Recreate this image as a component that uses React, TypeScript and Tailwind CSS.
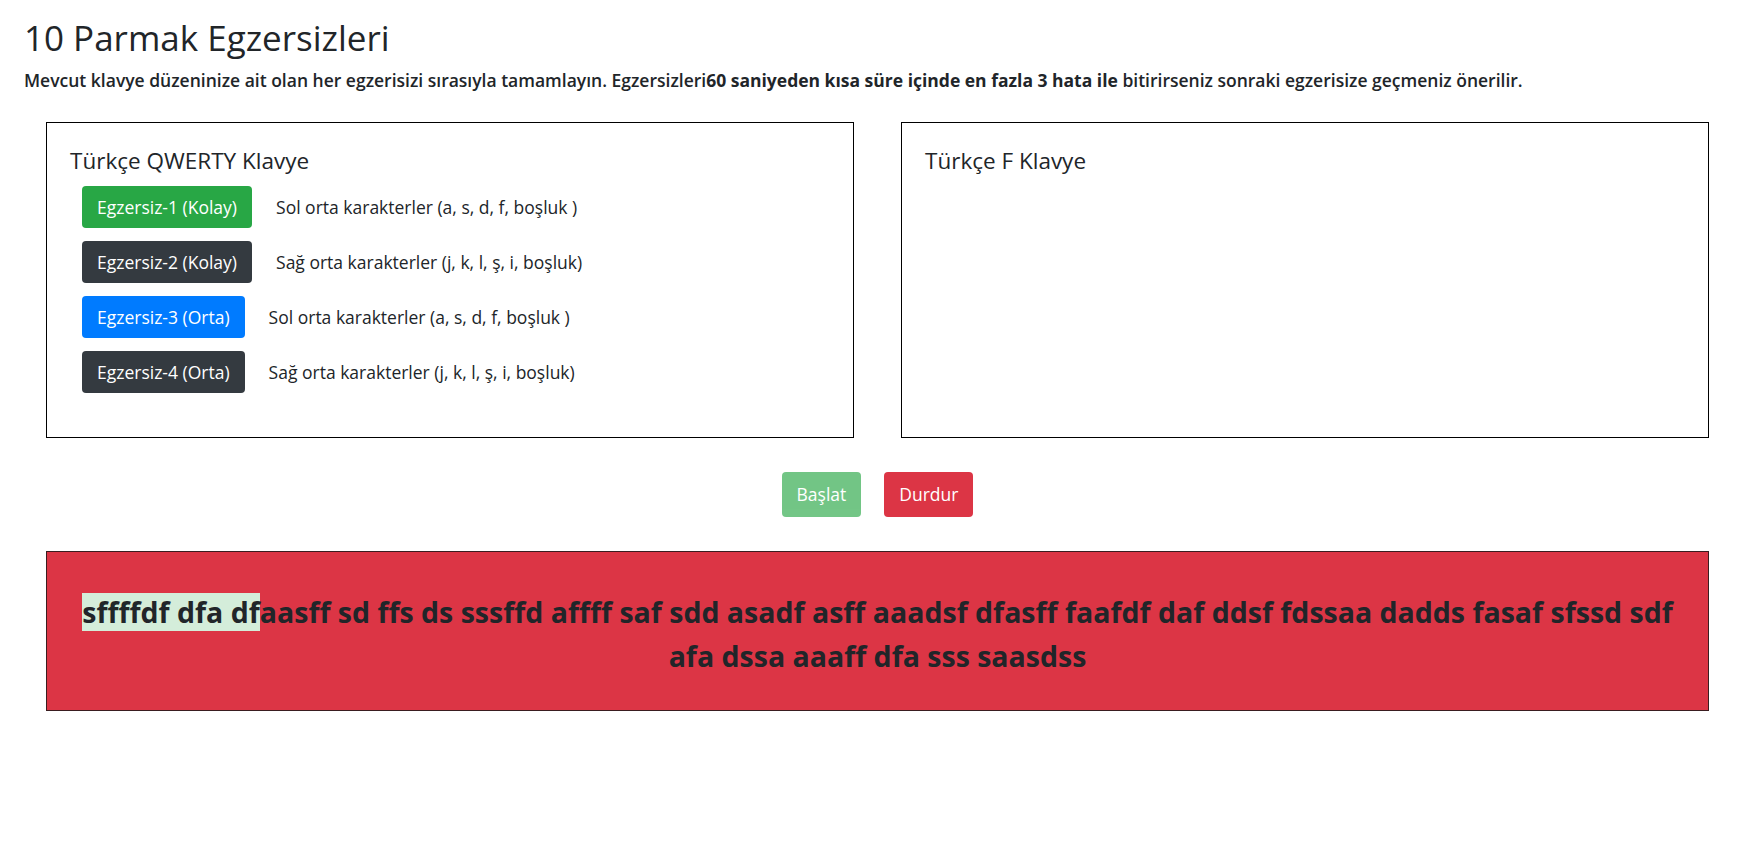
import React from 'react';

const exercises = [
  { label: 'Egzersiz-1 (Kolay)', color: 'bg-[#28a745]', desc: 'Sol orta karakterler (a, s, d, f, boşluk )' },
  { label: 'Egzersiz-2 (Kolay)', color: 'bg-[#343a40]', desc: 'Sağ orta karakterler (j, k, l, ş, i, boşluk)' },
  { label: 'Egzersiz-3 (Orta)', color: 'bg-[#007bff]', desc: 'Sol orta karakterler (a, s, d, f, boşluk )' },
  { label: 'Egzersiz-4 (Orta)', color: 'bg-[#343a40]', desc: 'Sağ orta karakterler (j, k, l, ş, i, boşluk)' },
];

export default function App() {
  return (
    <div className="min-h-screen bg-white text-[#212529] font-['Open_Sans',sans-serif] px-6 pt-[14px]">
      <h1 className="text-[35px] leading-[48px] font-medium">10 Parmak Egzersizleri</h1>
      <p className="mt-[6px] text-[17.5px] leading-6 font-semibold">
        Mevcut klavye düzeninize ait olan her egzerisizi sırasıyla tamamlayın. Egzersizleri
        <b className="font-bold">60 saniyeden kısa süre içinde en fazla 3 hata ile</b> bitirirseniz sonraki egzerisize geçmeniz önerilir.
      </p>

      <div className="mt-[30px] mx-[22px] grid grid-cols-2 gap-[47px]">
        <div className="border border-black h-[316px] px-[23px] pt-[24px]">
          <h4 className="text-[22.5px] leading-[28px] font-medium">Türkçe QWERTY Klavye</h4>
          <div className="mt-[11px] ml-3 flex flex-col gap-[13px]">
            {exercises.map((ex) => (
              <div key={ex.label} className="flex items-center">
                <button className={`${ex.color} text-white h-[42px] px-[15px] rounded text-[17.5px]`}>
                  {ex.label}
                </button>
                <span className="ml-6 text-[17.5px]">{ex.desc}</span>
              </div>
            ))}
          </div>
        </div>
        <div className="border border-black h-[316px] px-[23px] pt-[24px]">
          <h4 className="text-[22.5px] leading-[28px] font-medium">Türkçe F Klavye</h4>
        </div>
      </div>

      <div className="mt-[34px] flex justify-center gap-[23px]">
        <button className="bg-[#28a745] opacity-65 text-white h-[45px] px-[15px] rounded text-[17.5px]">Başlat</button>
        <button className="bg-[#dc3545] text-white h-[45px] px-[15px] rounded text-[17.5px]">Durdur</button>
      </div>

      <div className="mt-[34px] mx-[22px] border border-[#3a1d20] bg-[#dc3545] h-[160px] pt-[38px] px-5 text-center">
        <p className="text-[28.5px] leading-[44px] font-bold text-[#212529]">
          <span className="bg-[#d4edda]">sffffdf dfa df</span>aasff sd ffs ds sssffd affff saf sdd asadf asff aaadsf dfasff faafdf daf ddsf fdssaa dadds fasaf sfssd sdf
          <br />
          afa dssa aaaff dfa sss saasdss
        </p>
      </div>
    </div>
  );
}
